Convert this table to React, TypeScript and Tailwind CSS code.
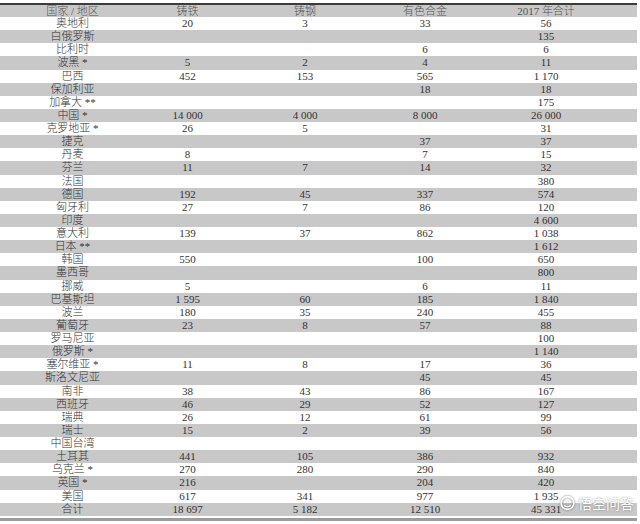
import React from 'react';

type Row = [string, string, string, string, string];

const rows: Row[] = [
  ['奥地利', '20', '3', '33', '56'],
  ['白俄罗斯', '', '', '', '135'],
  ['比利时', '', '', '6', '6'],
  ['波黑 *', '5', '2', '4', '11'],
  ['巴西', '452', '153', '565', '1 170'],
  ['保加利亚', '', '', '18', '18'],
  ['加拿大 **', '', '', '', '175'],
  ['中国 *', '14 000', '4 000', '8 000', '26 000'],
  ['克罗地亚 *', '26', '5', '', '31'],
  ['捷克', '', '', '37', '37'],
  ['丹麦', '8', '', '7', '15'],
  ['芬兰', '11', '7', '14', '32'],
  ['法国', '', '', '', '380'],
  ['德国', '192', '45', '337', '574'],
  ['匈牙利', '27', '7', '86', '120'],
  ['印度', '', '', '', '4 600'],
  ['意大利', '139', '37', '862', '1 038'],
  ['日本 **', '', '', '', '1 612'],
  ['韩国', '550', '', '100', '650'],
  ['墨西哥', '', '', '', '800'],
  ['挪威', '5', '', '6', '11'],
  ['巴基斯坦', '1 595', '60', '185', '1 840'],
  ['波兰', '180', '35', '240', '455'],
  ['葡萄牙', '23', '8', '57', '88'],
  ['罗马尼亚', '', '', '', '100'],
  ['俄罗斯 *', '', '', '', '1 140'],
  ['塞尔维亚 *', '11', '8', '17', '36'],
  ['斯洛文尼亚', '', '', '45', '45'],
  ['南非', '38', '43', '86', '167'],
  ['西班牙', '46', '29', '52', '127'],
  ['瑞典', '26', '12', '61', '99'],
  ['瑞士', '15', '2', '39', '56'],
  ['中国台湾', '', '', '', ''],
  ['土耳其', '441', '105', '386', '932'],
  ['乌克兰 *', '270', '280', '290', '840'],
  ['英国 *', '216', '', '204', '420'],
  ['美国', '617', '341', '977', '1 935'],
  ['合计', '18 697', '5 182', '12 510', '45 331'],
];

const cols = 'grid grid-cols-[145px_85px_150px_90px_152px] items-center text-center';

const App: React.FC = () => {
  return (
    <div
      className="relative w-[640px] h-[524px] bg-white pt-[3px] text-[11px] leading-none font-light text-[#333]"
      style={{ fontFamily: '"Liberation Serif", "Noto Sans CJK SC", serif' }}
    >
      <div className="w-[637px]">
        {/* header */}
        <div className={`${cols} h-[14px] border-t-2 border-[#3c3c3c] bg-[#c8c8c8] text-[#555]`}>
          <span>国家 / 地区</span>
          <span>铸铁</span>
          <span>铸钢</span>
          <span>有色合金</span>
          <span>2017 年合计</span>
        </div>

        {rows.map((r, i) => (
          <div
            key={r[0]}
            className={`${cols} h-[13.13px] ${i % 2 === 1 ? 'bg-[#c8c8c8]' : 'bg-white'}`}
          >
            {r.map((c, j) => (
              <span key={j}>{c}</span>
            ))}
          </div>
        ))}

        <div className="mt-[2px] h-[3px] bg-[#9c9c9c]" />
      </div>

      {/* watermark */}
      <div className="absolute left-[559px] top-[495px] flex items-center gap-[2px] whitespace-nowrap text-white [text-shadow:0_0_2px_rgba(0,0,0,0.45)]">
        <svg width="17" height="16" viewBox="0 0 20 18" className="drop-shadow-[0_0_1px_rgba(0,0,0,0.5)]">
          <circle cx="10" cy="9" r="7.5" fill="none" stroke="white" strokeWidth="2" />
          <circle cx="7" cy="8" r="1.3" fill="white" />
          <circle cx="13" cy="8" r="1.3" fill="white" />
          <path d="M6 12 Q10 15 14 12" fill="none" stroke="white" strokeWidth="1.5" />
        </svg>
        <span className="text-[14px] font-normal" style={{ fontFamily: '"Noto Sans CJK SC", sans-serif' }}>
          悟空问答
        </span>
      </div>
    </div>
  );
};

export default App;
